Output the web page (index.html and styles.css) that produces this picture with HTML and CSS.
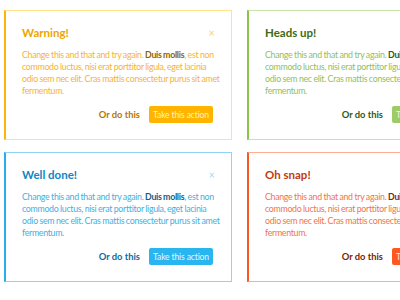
FILE: index.html
```html
<!DOCTYPE html>
<html lang="en">
<head>
    <meta charset="UTF-8">
    <meta name="viewport" content="width=device-width, initial-scale=1.0">
    <title>Alerts</title>
    <link rel="stylesheet" href="styles.css">
</head>
<body>
    <div class="alerts">
        <div class="alert alert-warning">
            <div class="alert-head">
                <h4>Warning!</h4>
                <span class="close">&times;</span>
            </div>
            <p>Change this and that and try again. <b>Duis mollis</b>, est non commodo luctus, nisi erat porttitor ligula, eget lacinia odio sem nec elit. Cras mattis consectetur purus sit amet fermentum.</p>
            <div class="actions">
                <a class="link">Or do this</a>
                <button class="btn">Take this action</button>
            </div>
        </div>
        <div class="alert alert-info">
            <div class="alert-head">
                <h4>Heads up!</h4>
                <span class="close">&times;</span>
            </div>
            <p>Change this and that and try again. <b>Duis mollis</b>, est non commodo luctus, nisi erat porttitor ligula, eget lacinia odio sem nec elit. Cras mattis consectetur purus sit amet fermentum.</p>
            <div class="actions">
                <a class="link">Or do this</a>
                <button class="btn">Take this action</button>
            </div>
        </div>
        <div class="alert alert-success">
            <div class="alert-head">
                <h4>Well done!</h4>
                <span class="close">&times;</span>
            </div>
            <p>Change this and that and try again. <b>Duis mollis</b>, est non commodo luctus, nisi erat porttitor ligula, eget lacinia odio sem nec elit. Cras mattis consectetur purus sit amet fermentum.</p>
            <div class="actions">
                <a class="link">Or do this</a>
                <button class="btn">Take this action</button>
            </div>
        </div>
        <div class="alert alert-danger">
            <div class="alert-head">
                <h4>Oh snap!</h4>
                <span class="close">&times;</span>
            </div>
            <p>Change this and that and try again. <b>Duis mollis</b>, est non commodo luctus, nisi erat porttitor ligula, eget lacinia odio sem nec elit. Cras mattis consectetur purus sit amet fermentum.</p>
            <div class="actions">
                <a class="link">Or do this</a>
                <button class="btn">Take this action</button>
            </div>
        </div>
    </div>
</body>
</html>
```

FILE: styles.css
```css
body {
    margin: 0;
    padding: 10px 4px;
    background-color: #ffffff;
    font-family: Lato, sans-serif;
    overflow: hidden;
}
.alerts {
    display: grid;
    grid-template-columns: 228px 228px;
    column-gap: 15px;
    row-gap: 12px;
    width: 500px;
}
.alert {
    box-sizing: border-box;
    height: 130px;
    padding: 15px 18px 15px 16px;
    border: 1px solid;
    border-left-width: 2px;
}
.alert-head {
    display: flex;
    justify-content: space-between;
    align-items: center;
}
.alert h4 {
    margin: 0;
    font-size: 11.5px;
    font-weight: 700;
    line-height: 14px;
}
.close {
    font-size: 11px;
    line-height: 14px;
    opacity: 0.5;
    margin-right: -2px;
}
.alert p {
    margin: 9px -8px 0 0;
    font-size: 8.8px;
    line-height: 12px;
    letter-spacing: -0.3px;
    word-spacing: -0.3px;
}
.alert p b {
    font-weight: 700;
}
.actions {
    display: flex;
    justify-content: flex-end;
    align-items: center;
    gap: 9px;
    margin-top: 9px;
}
.link {
    font-size: 9.4px;
    font-weight: 700;
}
.btn {
    border: none;
    border-radius: 2px;
    height: 17px;
    width: 64px;
    padding: 0;
    font-family: inherit;
    font-size: 8.6px;
    letter-spacing: -0.15px;
}

.alert-warning { border-color: #ffe28c; border-left-color: #fbb60b; }
.alert-warning h4, .alert-warning .close { color: #eda500; }
.alert-warning p { color: #f7b331; }
.alert-warning b { color: #8a6400; }
.alert-warning .link { color: #b47800; }
.alert-warning .btn { background-color: #ffb400; color: #fff2c9; }

.alert-info { border-color: #c9e2a6; border-left-color: #8bc34a; }
.alert-info h4 { color: #3d6b16; }
.alert-info .close { color: #8bc34a; }
.alert-info p { color: #8fbf5d; }
.alert-info b { color: #2e5a10; }
.alert-info .link { color: #2f5a12; }
.alert-info .btn { background-color: #9ccc65; color: #eef7e2; }

.alert-success { border-color: #8fd3f5; border-left-color: #25b0ec; }
.alert-success h4 { color: #0f86c4; }
.alert-success .close { color: #4fb9e8; }
.alert-success p { color: #42b0e3; }
.alert-success b { color: #0b5e8c; }
.alert-success .link { color: #0e6ba0; }
.alert-success .btn { background-color: #29b6f0; color: #e6f6fd; }

.alert-danger { border-color: #ffae94; border-left-color: #fb5521; }
.alert-danger h4 { color: #c23a0c; }
.alert-danger .close { color: #ff7a50; }
.alert-danger p { color: #f0744c; }
.alert-danger b { color: #8a2400; }
.alert-danger .link { color: #7e2200; }
.alert-danger .btn { background-color: #ff5722; color: #ffe8e0; }
```
